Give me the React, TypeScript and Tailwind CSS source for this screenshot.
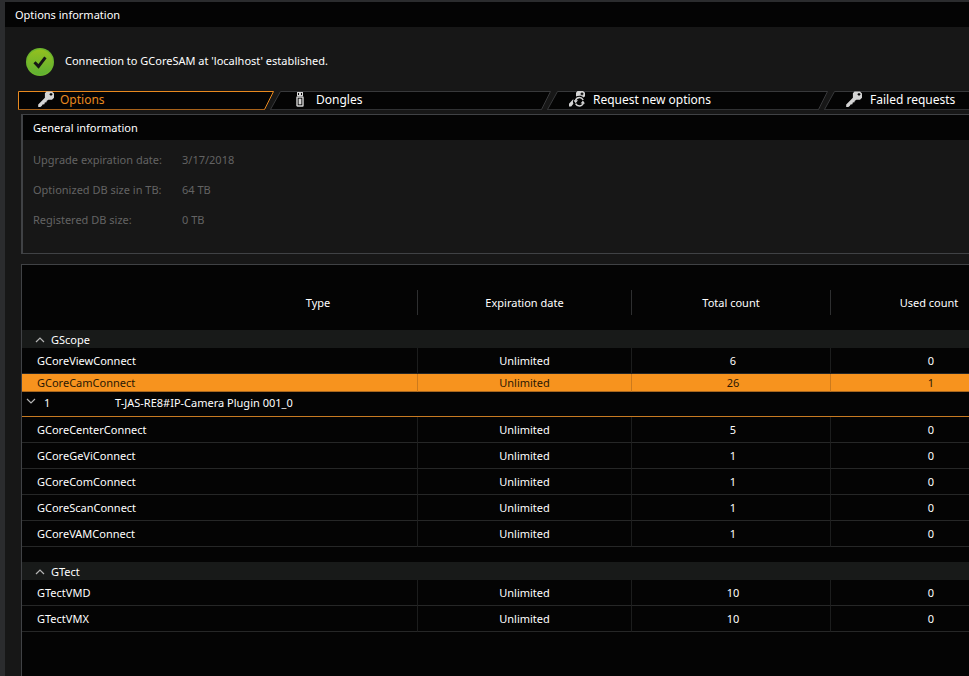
import { useState } from 'react';
import type { ReactNode } from 'react';
import clsx from 'clsx';

type License = { name: string; expires: string; total: number; used: number };
type Group = { name: string; items: License[] };

const groups: Group[] = [
  {
    name: 'GScope',
    items: [
      { name: 'GCoreViewConnect', expires: 'Unlimited', total: 6, used: 0 },
      { name: 'GCoreCamConnect', expires: 'Unlimited', total: 26, used: 1 },
      { name: 'GCoreCenterConnect', expires: 'Unlimited', total: 5, used: 0 },
      { name: 'GCoreGeViConnect', expires: 'Unlimited', total: 1, used: 0 },
      { name: 'GCoreComConnect', expires: 'Unlimited', total: 1, used: 0 },
      { name: 'GCoreScanConnect', expires: 'Unlimited', total: 1, used: 0 },
      { name: 'GCoreVAMConnect', expires: 'Unlimited', total: 1, used: 0 },
    ],
  },
  {
    name: 'GTect',
    items: [
      { name: 'GTectVMD', expires: 'Unlimited', total: 10, used: 0 },
      { name: 'GTectVMX', expires: 'Unlimited', total: 10, used: 0 },
    ],
  },
];

const generalInfo = [
  { label: 'Upgrade expiration date:', value: '3/17/2018' },
  { label: 'Optionized DB size in TB:', value: '64 TB' },
  { label: 'Registered DB size:', value: '0 TB' },
];

function KeyIcon() {
  return (
    <svg width="16" height="16" viewBox="0 0 16 16" aria-hidden="true">
      <path
        fill="#d4d4d4"
        fillRule="evenodd"
        d="M8.5 0.5h5.5L16 2.5v4.2L14 8.8h-3.6L8.6 10v1.2l-1.8.3-.4 1.8-1.8.2-.9 1.6-1.4.9H.2v-2.6l6.7-6.7V2.2zM12.4 2v.8h-.8V4h.8v.8h1.2V4h.8V2.8h-.8V2z"
      />
    </svg>
  );
}

function DongleIcon() {
  return (
    <svg width="8" height="15" viewBox="0 0 8 15" aria-hidden="true">
      <path fill="#d4d4d4" fillRule="evenodd" d="M1 0h6v4H1zM2 1v2h1V1zM5 1v2h1V1z" />
      <rect x="1" y="5" width="6" height="9" rx="0.5" fill="none" stroke="#d4d4d4" strokeWidth="1.4" />
      <rect x="2.6" y="6.6" width="2.8" height="5.8" fill="#d4d4d4" />
    </svg>
  );
}

function RequestIcon() {
  return (
    <svg width="16" height="16" viewBox="0 0 16 16" aria-hidden="true">
      <path
        fill="#d4d4d4"
        fillRule="evenodd"
        d="M8.5 0h5.5L16 1.8v3.4l-1.4 1.2C12.8 4.5 9.6 4.2 7 5.6V1.8zM12.4 1.4v.8h-.8v1.2h.8v.8h1.2v-.8h.8V2.2h-.8v-.8z"
      />
      <path fill="#d4d4d4" d="M4.6 7.8c-.9 1.7-.8 3.6-.2 5l-2.2 2.6H0v-2.6z" />
      <path
        fill="none"
        stroke="#d4d4d4"
        strokeWidth="1.5"
        d="M6.4 9.6C7.2 7.6 8.8 6.6 10.4 6.6c1.7 0 3 .9 3.8 2.4M14.4 12c-.8 2-2.4 3-4 3-1.7 0-3-.9-3.8-2.4"
      />
      <path fill="#d4d4d4" d="M4.4 9.2H9l-2.3 3zM16 12.4h-4.4l2.3-3z" />
    </svg>
  );
}

const tabs: { id: string; label: string; icon: ReactNode; iconBox: string }[] = [
  { id: 'options', label: 'Options', icon: <KeyIcon />, iconBox: 'w-[22px]' },
  { id: 'dongles', label: 'Dongles', icon: <DongleIcon />, iconBox: 'w-5' },
  { id: 'request', label: 'Request new options', icon: <RequestIcon />, iconBox: 'w-6' },
  { id: 'failed', label: 'Failed requests', icon: <KeyIcon />, iconBox: 'w-6' },
];

function TabShape({ first, active }: { first: boolean; active: boolean }) {
  const width = first ? 256 : 281;
  const top = first ? 0.5 : 10.5;
  const side = active ? '#e8891f' : '#38393b';
  const bottom = active ? '#a7621a' : '#303133';
  return (
    <svg
      className="absolute inset-0"
      width={width}
      height="19"
      viewBox={`0 0 ${width} 19`}
      aria-hidden="true"
    >
      <path
        fill="#040404"
        stroke={side}
        d={`M0.5 18.5L${top} 0.5H${width - 0.5}L${width - 9.5} 18.5`}
      />
      <path stroke={bottom} d={`M0 18.5H${width - 9}`} />
    </svg>
  );
}

function Chevron({ open }: { open: boolean }) {
  return (
    <svg width="10" height="6" viewBox="0 0 10 6" aria-hidden="true">
      <path
        fill="none"
        stroke="#b4b4b4"
        strokeWidth="1.2"
        d={open ? 'M1 5L5 1L9 5' : 'M1 1L5 5L9 1'}
      />
    </svg>
  );
}

function LicenseRow({ item, selected }: { item: License; selected: boolean }) {
  const cell = clsx(
    'border-b p-0 leading-4',
    selected
      ? 'h-[18px] border-b-[#a8671f] border-r-[#cc7a1d] bg-[#f7931e] text-[#2a1804]'
      : 'h-[26px] border-b-[#262727] border-r-[#1c1d1d]',
  );
  return (
    <tr aria-selected={selected}>
      <td className={clsx(cell, 'border-r pl-[15px]')}>{item.name}</td>
      <td className={clsx(cell, 'border-r text-center')}>{item.expires}</td>
      <td className={clsx(cell, 'border-r pl-1 text-center')}>{item.total}</td>
      <td className={clsx(cell, 'pl-1 text-center')}>{item.used}</td>
    </tr>
  );
}

function LicenseTable() {
  const [closed, setClosed] = useState<string[]>([]);
  const selected = 'GCoreCamConnect';

  const toggle = (name: string) =>
    setClosed((prev) => (prev.includes(name) ? prev.filter((n) => n !== name) : [...prev, name]));

  return (
    <table className="w-[1005px] min-w-full table-fixed border-separate border-spacing-0">
      <colgroup>
        <col className="w-[396px]" />
        <col className="w-[214px]" />
        <col className="w-[199px]" />
        <col />
      </colgroup>
      <thead>
        <tr>
          {['Type', 'Expiration date', 'Total count', 'Used count'].map((title, i) => (
            <th key={title} className="px-0 pt-[25px] pb-[15px] font-normal">
              <div
                className={clsx(
                  'flex h-[25px] items-center justify-center pt-[2px]',
                  i === 0 && 'pl-[197px]',
                  i < 3 && 'border-r border-[#2e2f30]',
                )}
              >
                {title}
              </div>
            </th>
          ))}
        </tr>
      </thead>
      {groups.map((group, i) => (
        <tbody key={group.name}>
          {i > 0 && (
            <tr>
              <td colSpan={4} className="h-[15px] p-0" />
            </tr>
          )}
          <tr>
            <th colSpan={4} scope="rowgroup" className="h-[18px] bg-[#181a19] p-0 font-normal">
              <button
                type="button"
                onClick={() => toggle(group.name)}
                aria-expanded={!closed.includes(group.name)}
                className="flex h-[18px] w-full items-center gap-[6px] pt-[2px] pl-[13px] leading-4"
              >
                <Chevron open={!closed.includes(group.name)} />
                {group.name}
              </button>
            </th>
          </tr>
          {!closed.includes(group.name) &&
            group.items.flatMap((item) => {
              const row = (
                <LicenseRow key={item.name} item={item} selected={item.name === selected} />
              );
              if (item.name !== selected) return [row];
              return [
                row,
                <tr key="detail">
                  <td colSpan={4} className="h-[25px] border-b border-[#c77a22] p-0 align-top">
                    <div className="flex h-[22px] items-center leading-4">
                      <button type="button" aria-label="Expand device" className="mr-2 mb-1 ml-1">
                        <Chevron open={false} />
                      </button>
                      <span className="w-[71px]">1</span>
                      <span>T-JAS-RE8#IP-Camera Plugin 001_0</span>
                    </div>
                  </td>
                </tr>,
              ];
            })}
        </tbody>
      ))}
    </table>
  );
}

export default function App() {
  const [active, setActive] = useState('options');

  return (
    <div className="min-h-screen overflow-hidden bg-[#2b2c2e] pt-[2px] pl-[5px] font-['Noto_Sans','Open_Sans',sans-serif] text-[11px] text-white">
      <main className="flex min-h-[calc(100vh-2px)] flex-col bg-[#171717]">
        <h1 className="flex h-[25px] items-center bg-[#040404] pt-[2px] pl-[10px]">
          Options information
        </h1>

        <div className="flex items-center gap-[11px] pt-[21px] pb-[15px] pl-[21px]">
          <svg width="28" height="28" viewBox="0 0 28 28" aria-hidden="true">
            <defs>
              <linearGradient id="ok" x1="0" y1="0" x2="0" y2="1">
                <stop offset="0" stopColor="#93c01f" />
                <stop offset="1" stopColor="#5fb032" />
              </linearGradient>
            </defs>
            <circle cx="14" cy="14" r="14" fill="#6cb52d" />
            <circle cx="14" cy="14" r="12.6" fill="url(#ok)" />
            <path d="M8.5 14.2l4 4.2L19.4 9.4" fill="none" stroke="#161616" strokeWidth="3" />
          </svg>
          <p className="pb-[2px] leading-4">Connection to GCoreSAM at 'localhost' established.</p>
        </div>

        <div role="tablist" className="flex h-[19px] overflow-hidden pl-[13px]">
          {tabs.map((tab, i) => (
            <button
              key={tab.id}
              type="button"
              role="tab"
              aria-selected={active === tab.id}
              onClick={() => setActive(tab.id)}
              className={clsx(
                'relative flex h-[19px] shrink-0 items-start text-[12px] leading-[18px]',
                i === 0 ? 'w-[256px] pl-5' : '-ml-1 w-[281px]',
                i === 1 && 'pl-[26px]',
                i > 1 && 'pl-[22px]',
                active === tab.id ? 'text-[#e8891f]' : 'text-white',
              )}
            >
              <TabShape first={i === 0} active={active === tab.id} />
              <span className={clsx('relative flex h-4 shrink-0 items-center', tab.iconBox)}>
                {tab.icon}
              </span>
              <span className="relative">{tab.label}</span>
            </button>
          ))}
        </div>

        <section className="mt-1 ml-4 border-y border-l-2 border-[#404245]">
          <h2 className="flex h-[25px] items-center bg-[#040404] pt-[2px] pl-[10px]">
            General information
          </h2>
          <dl className="grid grid-cols-[149px_1fr] gap-y-[14px] pt-3 pb-[25px] pl-[10px] leading-4 text-[#636363]">
            {generalInfo.map((row) => (
              <div key={row.label} className="contents">
                <dt>{row.label}</dt>
                <dd>{row.value}</dd>
              </div>
            ))}
          </dl>
        </section>

        <section className="mt-[10px] ml-4 flex-1 overflow-hidden border-t border-l border-[#404245] bg-[#040404]">
          <LicenseTable />
        </section>
      </main>
    </div>
  );
}
